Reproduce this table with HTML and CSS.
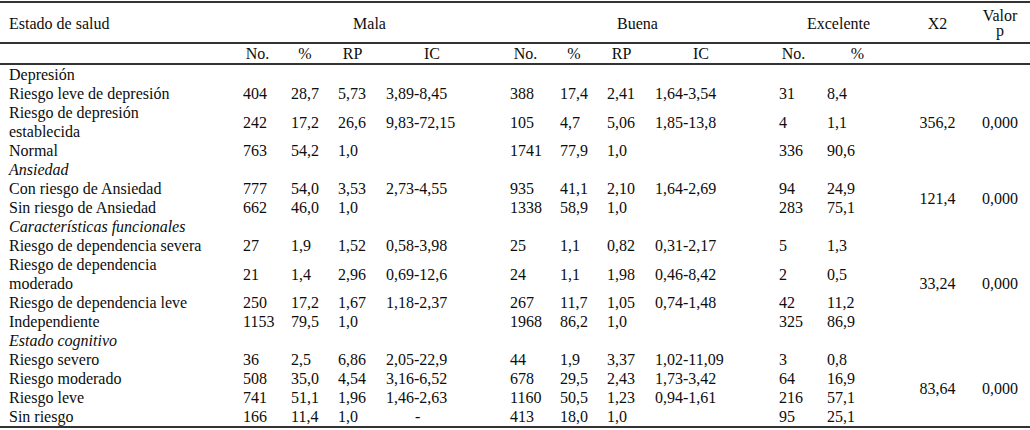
FILE: index.html
```html
<!DOCTYPE html>
<html lang="es">
<head>
<meta charset="utf-8">
<title>Estado de salud</title>
<link rel="stylesheet" href="styles.css">
</head>
<body>
<table class="tbl">
<colgroup>
<col class="c-label"><col class="c-no"><col class="c-pct"><col class="c-rp"><col class="c-ic">
<col class="c-no2"><col class="c-pct"><col class="c-rp"><col class="c-ic">
<col class="c-no"><col class="c-pct3"><col class="c-x2"><col class="c-p">
</colgroup>
<thead>
<tr class="h1">
<th class="lbl">Estado de salud</th>
<th colspan="4">Mala</th>
<th colspan="4">Buena</th>
<th colspan="2">Excelente</th>
<th>X2</th>
<th class="valor">Valor<br>p</th>
</tr>
<tr class="h2">
<th></th><th class="sm">No.</th><th class="sm">%</th><th class="sm">RP</th><th class="ic">IC</th><th class="sm">No.</th><th class="sm">%</th><th class="sm">RP</th><th class="ic">IC</th><th class="sm">No.</th><th class="pe">%</th><th></th><th></th>
</tr>
</thead>
<tbody>
<tr><td class="cat" colspan="13">Depresión</td></tr>
<tr><td class="lbl">Riesgo leve de depresión</td><td>404</td><td>28,7</td><td>5,73</td><td>3,89-8,45</td><td>388</td><td>17,4</td><td>2,41</td><td>1,64-3,54</td><td>31</td><td>8,4</td><td class="stat" rowspan="3">356,2</td><td class="stat" rowspan="3">0,000</td></tr>
<tr><td class="lbl">Riesgo de depresión<br>establecida</td><td>242</td><td>17,2</td><td>26,6</td><td>9,83-72,15</td><td>105</td><td>4,7</td><td>5,06</td><td>1,85-13,8</td><td>4</td><td>1,1</td></tr>
<tr><td class="lbl">Normal</td><td>763</td><td>54,2</td><td>1,0</td><td></td><td>1741</td><td>77,9</td><td>1,0</td><td></td><td>336</td><td>90,6</td></tr>
<tr><td class="cat it" colspan="13">Ansiedad</td></tr>
<tr><td class="lbl">Con riesgo de Ansiedad</td><td>777</td><td>54,0</td><td>3,53</td><td>2,73-4,55</td><td>935</td><td>41,1</td><td>2,10</td><td>1,64-2,69</td><td>94</td><td>24,9</td><td class="stat" rowspan="2">121,4</td><td class="stat" rowspan="2">0,000</td></tr>
<tr><td class="lbl">Sin riesgo de Ansiedad</td><td>662</td><td>46,0</td><td>1,0</td><td></td><td>1338</td><td>58,9</td><td>1,0</td><td></td><td>283</td><td>75,1</td></tr>
<tr><td class="cat it" colspan="13">Características funcionales</td></tr>
<tr><td class="lbl">Riesgo de dependencia severa</td><td>27</td><td>1,9</td><td>1,52</td><td>0,58-3,98</td><td>25</td><td>1,1</td><td>0,82</td><td>0,31-2,17</td><td>5</td><td>1,3</td><td class="stat" rowspan="4">33,24</td><td class="stat" rowspan="4">0,000</td></tr>
<tr><td class="lbl">Riesgo de dependencia<br>moderado</td><td>21</td><td>1,4</td><td>2,96</td><td>0,69-12,6</td><td>24</td><td>1,1</td><td>1,98</td><td>0,46-8,42</td><td>2</td><td>0,5</td></tr>
<tr><td class="lbl">Riesgo de dependencia leve</td><td>250</td><td>17,2</td><td>1,67</td><td>1,18-2,37</td><td>267</td><td>11,7</td><td>1,05</td><td>0,74-1,48</td><td>42</td><td>11,2</td></tr>
<tr><td class="lbl">Independiente</td><td>1153</td><td>79,5</td><td>1,0</td><td></td><td>1968</td><td>86,2</td><td>1,0</td><td></td><td>325</td><td>86,9</td></tr>
<tr><td class="cat it" colspan="13">Estado cognitivo</td></tr>
<tr><td class="lbl">Riesgo severo</td><td>36</td><td>2,5</td><td>6,86</td><td>2,05-22,9</td><td>44</td><td>1,9</td><td>3,37</td><td>1,02-11,09</td><td>3</td><td>0,8</td><td class="stat" rowspan="4">83,64</td><td class="stat" rowspan="4">0,000</td></tr>
<tr><td class="lbl">Riesgo moderado</td><td>508</td><td>35,0</td><td>4,54</td><td>3,16-6,52</td><td>678</td><td>29,5</td><td>2,43</td><td>1,73-3,42</td><td>64</td><td>16,9</td></tr>
<tr><td class="lbl">Riesgo leve</td><td>741</td><td>51,1</td><td>1,96</td><td>1,46-2,63</td><td>1160</td><td>50,5</td><td>1,23</td><td>0,94-1,61</td><td>216</td><td>57,1</td></tr>
<tr><td class="lbl">Sin riesgo</td><td>166</td><td>11,4</td><td>1,0</td><td class="dash">-</td><td>413</td><td>18,0</td><td>1,0</td><td></td><td>95</td><td>25,1</td></tr>
</tbody>
</table>
</body>
</html>
```

FILE: styles.css
```css
html, body {
  margin: 0;
  padding: 0;
  background: #ffffff;
}

body {
  color: #0d0d0d;
  font-family: "Liberation Serif", "Times New Roman", serif;
}

.tbl {
  width: 1030px;
  margin-top: 1px;
  border-collapse: collapse;
  table-layout: fixed;
  font-size: 16px;
  border-top: 2px solid #333333;
  border-bottom: 2px solid #333333;
}

.c-label { width: 236px; }
.c-no { width: 48px; }
.c-no2 { width: 50px; }
.c-pct { width: 47px; }
.c-rp { width: 48px; }
.c-ic { width: 124px; }
.c-pct3 { width: 85px; }
.c-x2 { width: 65px; }
.c-p { width: 60px; }

th {
  font-weight: normal;
  text-align: center;
  vertical-align: middle;
  white-space: nowrap;
}

.h1 th {
  padding: 5px 0 4px;
  line-height: 15px;
  border-bottom: 2px solid #333333;
}

.h1 th.lbl {
  text-align: left;
  padding-left: 9px;
}

.h2 th {
  padding: 1px 0;
  line-height: 17px;
  border-bottom: 2px solid #333333;
}

.h2 th.sm {
  padding-right: 5px;
}

.h2 th.ic {
  padding-right: 18px;
}

.h2 th.pe {
  padding-right: 10px;
}

td {
  padding: 0 0 0 7px;
  line-height: 19px;
  vertical-align: middle;
  text-align: left;
  white-space: nowrap;
}

td.lbl,
td.cat {
  padding-left: 9px;
}

td.it {
  font-style: italic;
}

td.stat {
  text-align: center;
  padding-left: 0;
}

td.dash {
  padding-left: 36px;
}
```
